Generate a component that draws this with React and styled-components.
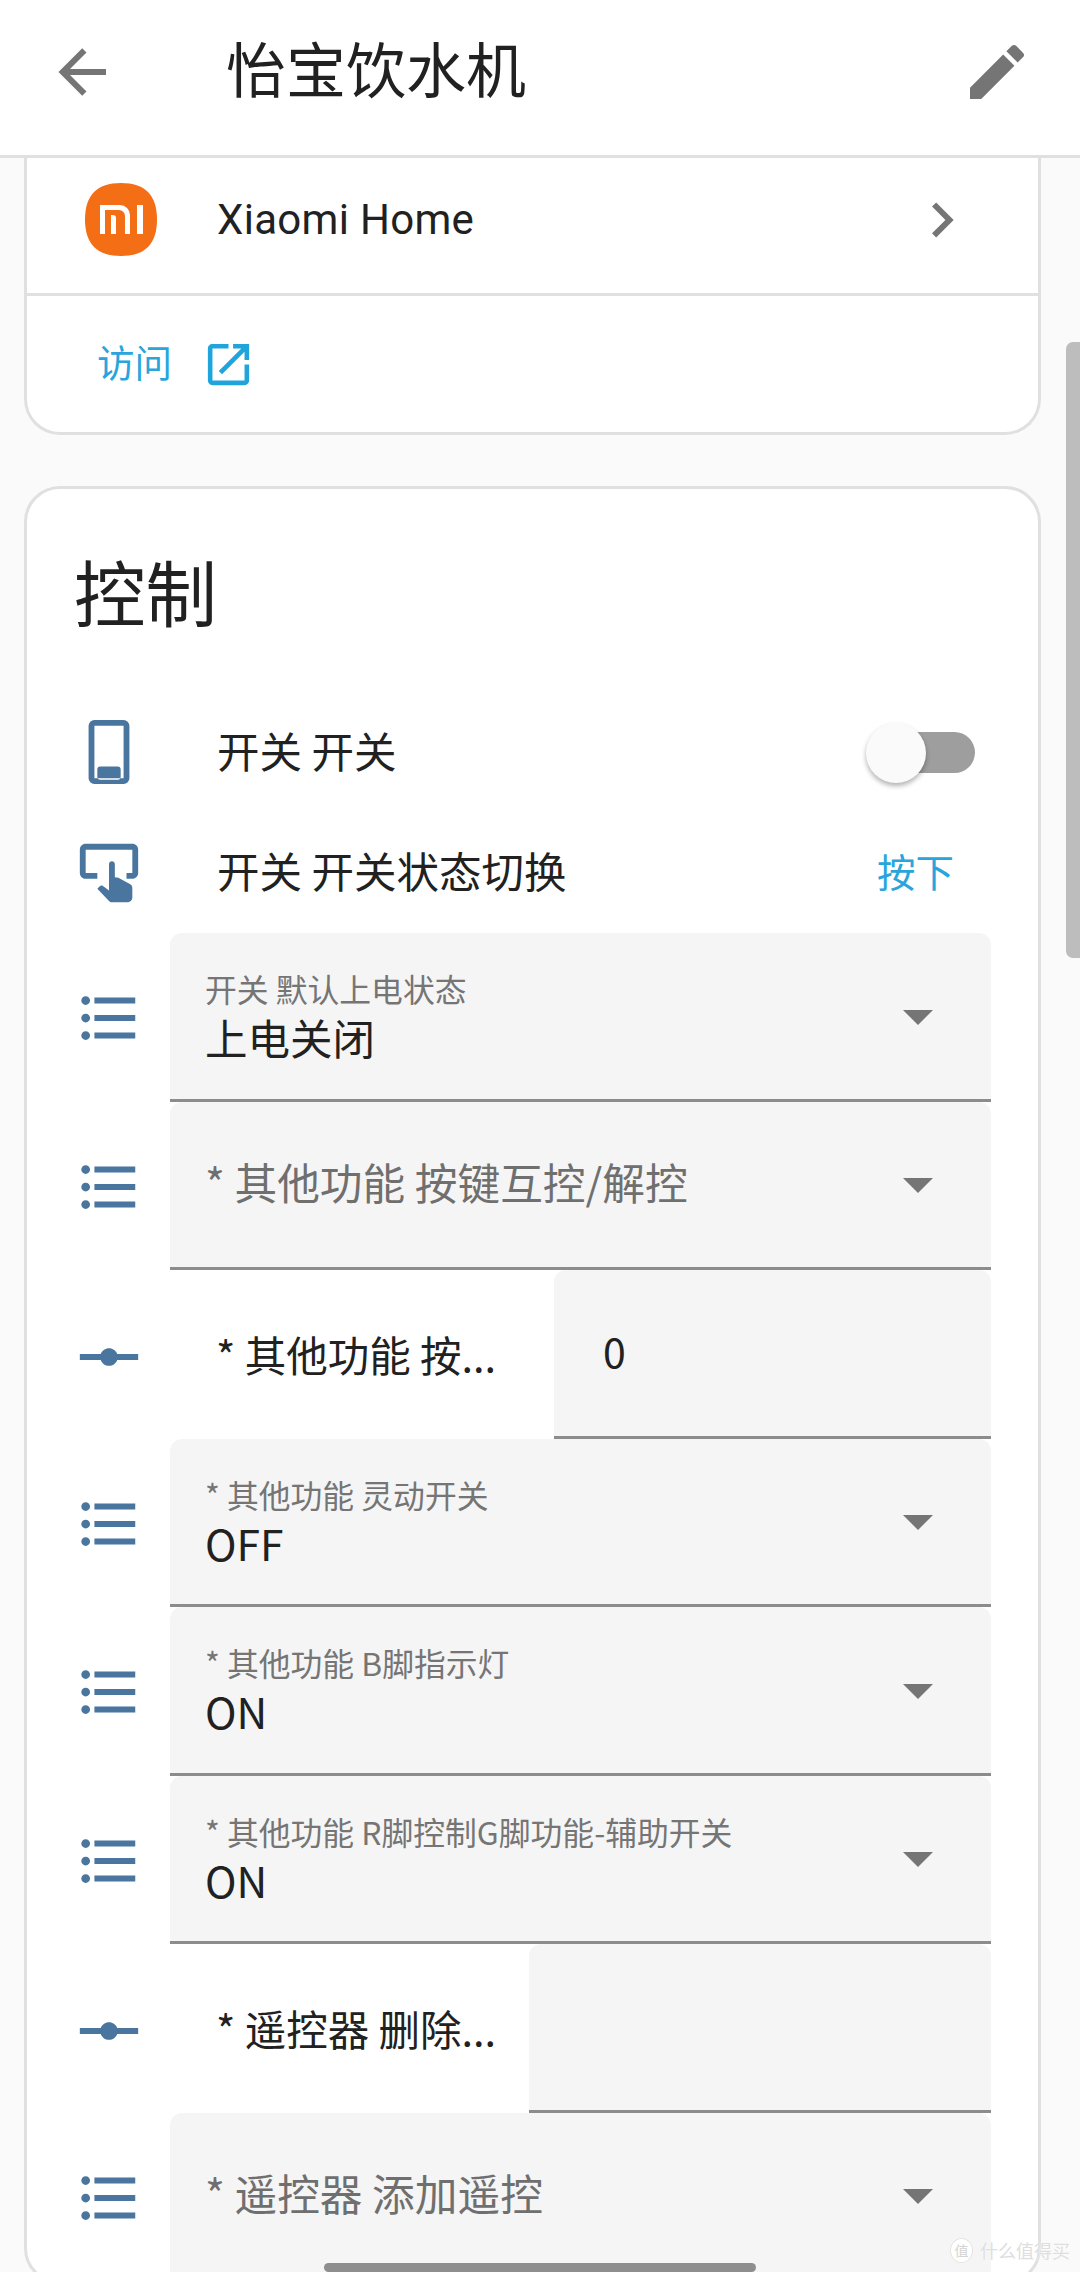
import React from 'react';
import styled, { createGlobalStyle } from 'styled-components'

const GlobalStyle = createGlobalStyle`
  html, body {
    margin: 0;
    padding: 0;
    background: #fafafa;
  }
  * {
    box-sizing: border-box;
  }
`

const ICONS = {
  back: 'M20,11V13H8L13.5,18.5L12.08,19.92L4.16,12L12.08,4.08L13.5,5.5L8,11H20Z',
  pencil: 'M20.71,7.04C21.1,6.65 21.1,6 20.71,5.63L18.37,3.29C18,2.9 17.35,2.9 16.96,3.29L15.12,5.12L18.87,8.87M3,17.25V21H6.75L17.81,9.93L14.06,6.18L3,17.25Z',
  chevron: 'M8.59,16.58L13.17,12L8.59,7.41L10,6L16,12L10,18L8.59,16.58Z',
  open: 'M14,3V5H17.59L7.76,14.83L9.17,16.24L19,6.41V10H21V3M19,19H5V5H12V3H5C3.89,3 3,3.9 3,5V19A2,2 0 0,0 5,21H19A2,2 0 0,0 21,19V12H19V19Z',
  list: 'M7,5H21V7H7V5M7,13V11H21V13H7M4,4.5A1.5,1.5 0 0,1 5.5,6A1.5,1.5 0 0,1 4,7.5A1.5,1.5 0 0,1 2.5,6A1.5,1.5 0 0,1 4,4.5M4,10.5A1.5,1.5 0 0,1 5.5,12A1.5,1.5 0 0,1 4,13.5A1.5,1.5 0 0,1 2.5,12A1.5,1.5 0 0,1 4,10.5M7,19V17H21V19H7M4,16.5A1.5,1.5 0 0,1 5.5,18A1.5,1.5 0 0,1 4,19.5A1.5,1.5 0 0,1 2.5,18A1.5,1.5 0 0,1 4,16.5Z',
  slider: 'M2,11H9.17C9.58,9.83 10.69,9 12,9C13.31,9 14.42,9.83 14.83,11H22V13H14.83C14.42,14.17 13.31,15 12,15C10.69,15 9.58,14.17 9.17,13H2V11Z',
  tap: 'M20 20.5C19.97 21.32 19.32 21.97 18.5 22H13C12.62 22 12.26 21.85 12 21.57L8 17.37L8.74 16.6C8.93 16.39 9.2 16.28 9.5 16.28H9.7L12 18V9C12 8.45 12.45 8 13 8S14 8.45 14 9V13.47L15.21 13.6L19.15 15.79C19.68 16.03 20 16.56 20 17.14V20.5M20 2H4C2.9 2 2 2.9 2 4V12C2 13.11 2.9 14 4 14H8V12L4 12L4 4H20L20 12H18V14H20C21.1 14 22 13.09 22 12V4C22 2.9 21.11 2 20 2Z',
  lightSwitch: 'M7,1H17A2,2 0 0,1 19,3V21A2,2 0 0,1 17,23H7A2,2 0 0,1 5,21V3A2,2 0 0,1 7,1M7,3V21H17V3H7M9,17H15A1,1 0 0,1 16,18V20.5A1,1 0 0,1 15,21.5H9A1,1 0 0,1 8,20.5V18A1,1 0 0,1 9,17Z',
}

const Page = styled.div`
  position: relative;
  width: 1080px;
  height: 2272px;
  overflow: hidden;
  background: #fafafa;
  color: #212121;
  font-family: "Noto Sans CJK SC", Roboto, sans-serif;
`
/*Top app bar*/
const Header = styled.header`
  display: flex;
  align-items: flex-start;
  height: 158px;
  padding: 36px 47px 0 46px;
  background: #fff;
  border-bottom: 3px solid #e0e0e0;
`
const HeaderTitle = styled.h1`
  flex: 1;
  margin: 0 0 0 108px;
  font-size: 60px;
  font-weight: 400;
  line-height: 62px;
`
const Icon = styled.svg`
  flex: none;
  display: block;
  width: ${p => p.$size || 70}px;
  height: ${p => p.$size || 70}px;
  margin-top: ${p => p.$nudge || 0}px;
  fill: ${p => p.$color || '#49759f'};
`
const Content = styled.main`
  padding: 0 39px 0 24px;
`
const Card = styled.section`
  background: #fff;
  border: 3px solid #e0e0e0;
  border-radius: 36px;
`
const IntegrationCard = styled(Card)`
  border-top: none;
  border-top-left-radius: 0;
  border-top-right-radius: 0;
`
const DeviceRow = styled.div`
  display: flex;
  align-items: center;
  height: 138px;
  padding: 0 61px 12px 58px;
  border-bottom: 3px solid #e0e0e0;
`
const DeviceName = styled.span`
  flex: 1;
  margin-left: 60px;
  font-family: Roboto, sans-serif;
  font-size: 42px;
  letter-spacing: .3px;
`
const VisitRow = styled.div`
  display: flex;
  align-items: center;
  height: 136px;
  padding-left: 70px;
  color: #2aa5dc;
  font-size: 37.5px;
`
const VisitLink = styled.a`
  margin-right: 29px;
  padding-bottom: 8px;
`
const ControlCard = styled(Card)`
  margin-top: 51px;
  padding: 0 47px 0 47px;
`
const ControlTitle = styled.h2`
  height: 203px;
  margin: 0;
  padding-top: 60px;
  font-size: 71.5px;
  font-weight: 400;
  line-height: 82px;
`
const Row = styled.div`
  display: flex;
  align-items: center;
  height: ${p => p.$height}px;
`
const RowLabel = styled.span`
  flex: 1;
  margin-left: 73px;
  padding-bottom: 6px;
  font-size: 42.5px;
  white-space: nowrap;
`
const Toggle = styled.div`
  position: relative;
  width: 104px;
  height: 41px;
  margin-right: 16px;
  border-radius: 21px;
  background: #9e9e9e;
`
const ToggleThumb = styled.div`
  position: absolute;
  left: -5px;
  top: -9px;
  width: 60px;
  height: 60px;
  border-radius: 50%;
  background: #fafafa;
  box-shadow: 0 3px 5px rgba(0, 0, 0, .3);
`
const PressButton = styled.a`
  margin-right: 37px;
  padding-bottom: 6px;
  color: #2aa5dc;
  font-size: 38.5px;
`
const FieldRow = styled.div`
  display: flex;
  align-items: center;
  height: 168.5px;
`
const SelectField = styled.div`
  display: flex;
  align-items: center;
  flex: 1;
  height: 100%;
  margin-left: 26px;
  padding: 0 58px 0 35px;
  background: #f5f5f5;
  border-bottom: 3px solid #8c8c8c;
  border-radius: 12px 12px 0 0;
`
const SelectText = styled.div`
  flex: 1;
  display: flex;
  flex-direction: column;
  gap: 5px;
`
const FloatingLabel = styled.span`
  color: #757575;
  font-size: 31.8px;
  line-height: 38px;
`
const SelectValue = styled.span`
  font-size: 42.5px;
  line-height: 50px;
`
const Placeholder = styled.span`
  padding-bottom: 6px;
  color: #6f6f6f;
  font-size: 42.7px;
`
const Caret = styled.div`
  width: 0;
  height: 0;
  margin-top: 3px;
  border-left: 15px solid transparent;
  border-right: 15px solid transparent;
  border-top: 15px solid #757575;
`
const NumberLabel = styled.span`
  flex: 1;
  margin-left: 72px;
  font-size: 41.5px;
  white-space: nowrap;
`
const NumberField = styled.div`
  display: flex;
  align-items: center;
  width: ${p => p.$width}px;
  height: 100%;
  padding: 0 0 6px 49px;
  background: #f5f5f5;
  border-bottom: 3px solid #8c8c8c;
  border-radius: 12px 12px 0 0;
  font-size: 41px;
`
/*Overlays of the phone screen*/
const Scrollbar = styled.div`
  position: absolute;
  right: 0;
  top: 342px;
  width: 14px;
  height: 616px;
  border-radius: 7px 0 0 7px;
  background: #bdbdbd;
`
const HomeBar = styled.div`
  position: absolute;
  left: 324px;
  bottom: 0;
  width: 432px;
  height: 9px;
  border-radius: 5px;
  background: #8e8e8e;
`
const Watermark = styled.div`
  position: absolute;
  right: 10px;
  bottom: 9px;
  display: flex;
  align-items: center;
  gap: 7px;
  color: #dedede;
  font-size: 18px;
  text-shadow: 0 0 2px #fff;
`
const WatermarkBadge = styled.span`
  display: flex;
  align-items: center;
  justify-content: center;
  width: 23px;
  height: 25px;
  border: 1px solid #e4e4e4;
  border-radius: 50%;
  background: #fff;
  color: #d4d4d4;
  font-size: 14px;
`

const Mdi = ({ name, size, color, nudge }) => (
  <Icon viewBox="0 0 24 24" $size={size} $color={color} $nudge={nudge}>
    <path d={ICONS[name]} fillRule="evenodd" />
  </Icon>
)

const XiaomiLogo = () => (
  <svg width="72" height="73" viewBox="0 0 72 73">
    <path d="M36 0C60 0 72 12 72 36.5C72 61 60 73 36 73C12 73 0 61 0 36.5C0 12 12 0 36 0Z" fill="#f36e14" />
    <path d="M15 22h20a10 10 0 0 1 10 10v19h-5V33a6 6 0 0 0-6-6H20v24h-5z" fill="#fff" />
    <path d="M26 32h2a3 3 0 0 1 3 3v16h-5z" fill="#fff" />
    <rect x="52" y="22" width="6" height="29" fill="#fff" />
  </svg>
)

function Select({ label, value }) {
  return (
    <FieldRow>
      <Mdi name="list" nudge={2} />
      <SelectField>
        <SelectText>
          {value ? <FloatingLabel>{label}</FloatingLabel> : <Placeholder>{label}</Placeholder>}
          {value && <SelectValue>{value}</SelectValue>}
        </SelectText>
        <Caret />
      </SelectField>
    </FieldRow>
  )
}

function NumberInput({ label, value, width }) {
  return (
    <FieldRow>
      <Mdi name="slider" nudge={5} />
      <NumberLabel>{label}</NumberLabel>
      <NumberField $width={width}>{value}</NumberField>
    </FieldRow>
  )
}

function App() {
  return (
    <Page>
      <GlobalStyle />
      <Header>
        <Mdi name="back" size={72} color="#757575" />
        <HeaderTitle>怡宝饮水机</HeaderTitle>
        <Mdi name="pencil" size={72} color="#757575" />
      </Header>
      <Content>
        <IntegrationCard>
          <DeviceRow>
            <XiaomiLogo />
            <DeviceName>Xiaomi Home</DeviceName>
            <Mdi name="chevron" color="#757575" />
          </DeviceRow>
          <VisitRow>
            <VisitLink>访问</VisitLink>
            <Mdi name="open" size={55} color="#1fa5dc" />
          </VisitRow>
        </IntegrationCard>
        <ControlCard>
          <ControlTitle>控制</ControlTitle>
          <Row $height={120}>
            <Mdi name="lightSwitch" />
            <RowLabel>开关 开关</RowLabel>
            <Toggle><ToggleThumb /></Toggle>
          </Row>
          <Row $height={121}>
            <Mdi name="tap" />
            <RowLabel>开关 开关状态切换</RowLabel>
            <PressButton>按下</PressButton>
          </Row>
          <Select label="开关 默认上电状态" value="上电关闭" />
          <Select label="* 其他功能 按键互控/解控" />
          <NumberInput label="* 其他功能 按..." value="0" width={437} />
          <Select label="* 其他功能 灵动开关" value="OFF" />
          <Select label="* 其他功能 B脚指示灯" value="ON" />
          <Select label="* 其他功能 R脚控制G脚功能-辅助开关" value="ON" />
          <NumberInput label="* 遥控器 删除..." width={462} />
          <Select label="* 遥控器 添加遥控" />
        </ControlCard>
      </Content>
      <Scrollbar />
      <HomeBar />
      <Watermark>
        <WatermarkBadge>值</WatermarkBadge>
        什么值得买
      </Watermark>
    </Page>
  )
}
export default App;
